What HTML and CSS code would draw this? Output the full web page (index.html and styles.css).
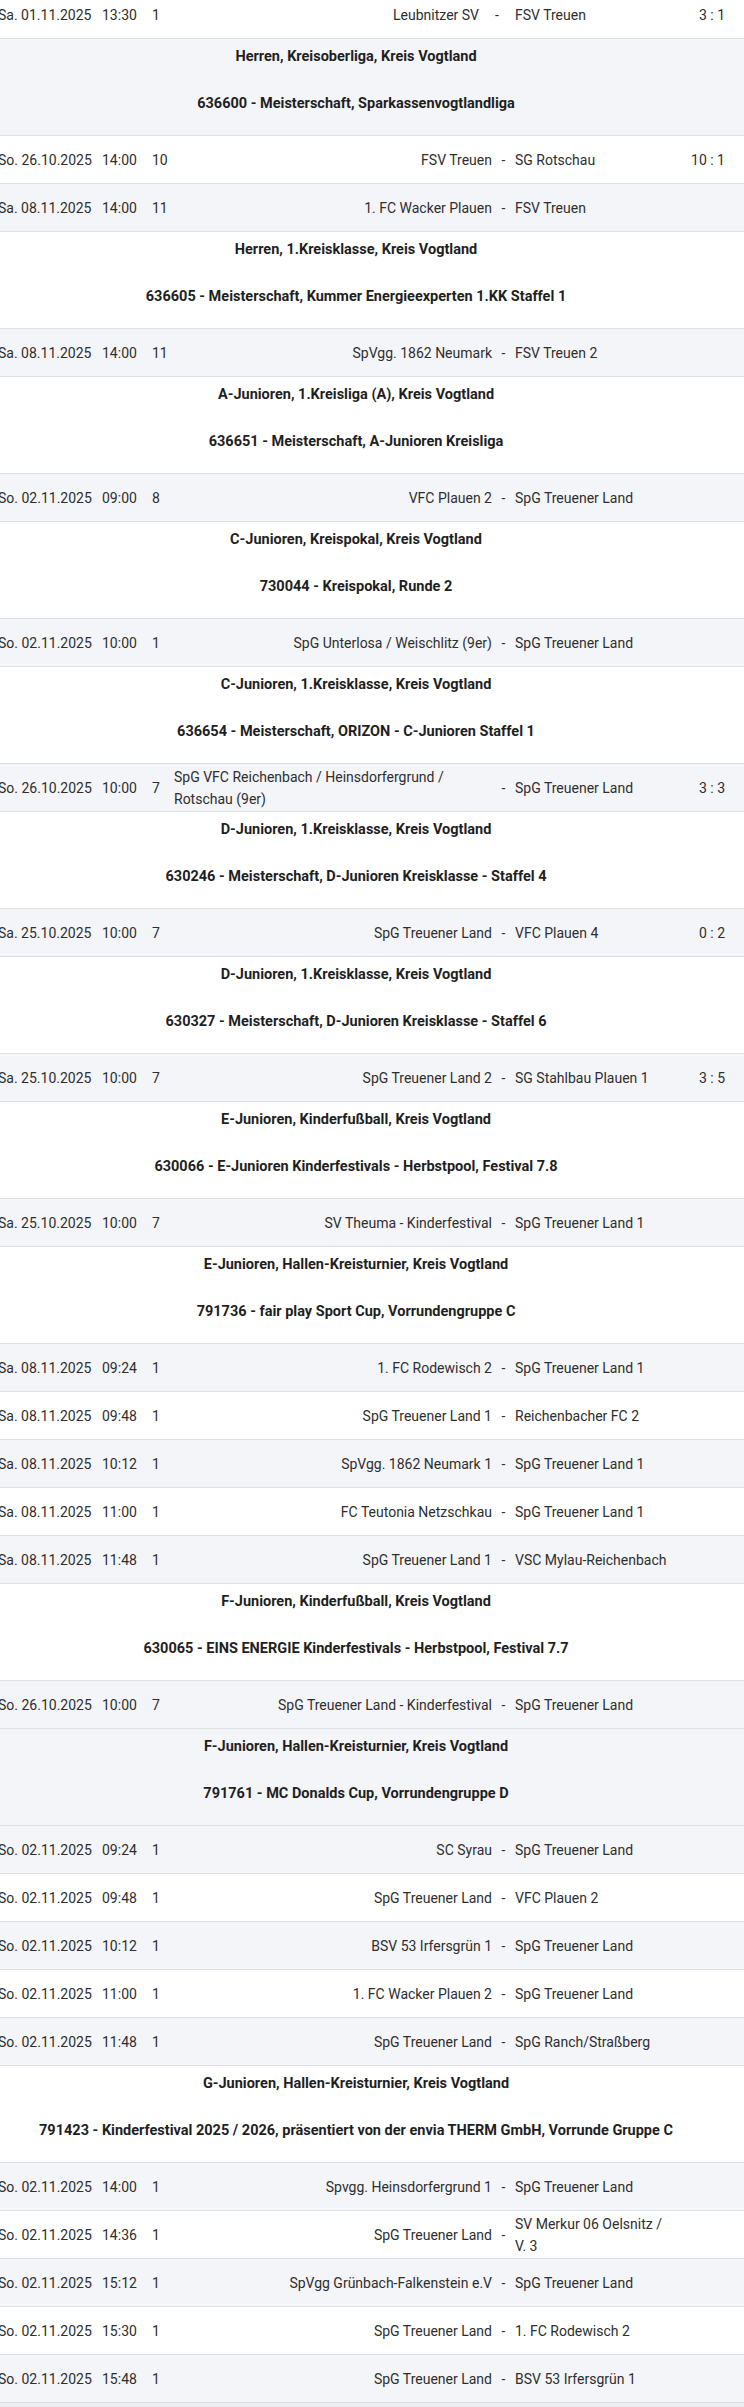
FILE: index.html
```html
<!DOCTYPE html>
<html lang="de">
<head>
<meta charset="utf-8">
<title>Spielplan</title>
<link rel="stylesheet" href="styles.css">
</head>
<body>
<div class="fixtures">
  <div class="match match--first">
    <span class="match__date">Sa. 01.11.2025</span><span class="match__time">13:30</span><span class="match__no">1</span>
    <span class="match__home"><span>Leubnitzer SV</span></span><span class="match__sep">-</span><span class="match__away">FSV Treuen</span><span class="match__score">3 : 1</span>
  </div>
  <div class="group group--alt">
    <div class="group__title">Herren, Kreisoberliga, Kreis Vogtland</div>
    <div class="group__comp">636600 - Meisterschaft, Sparkassenvogtlandliga</div>
  </div>
  <div class="match">
    <span class="match__date">So. 26.10.2025</span><span class="match__time">14:00</span><span class="match__no">10</span>
    <span class="match__home"><span>FSV Treuen</span></span><span class="match__sep">-</span><span class="match__away">SG Rotschau</span><span class="match__score">10 : 1</span>
  </div>
  <div class="match match--alt">
    <span class="match__date">Sa. 08.11.2025</span><span class="match__time">14:00</span><span class="match__no">11</span>
    <span class="match__home"><span>1. FC Wacker Plauen</span></span><span class="match__sep">-</span><span class="match__away">FSV Treuen</span><span class="match__score"></span>
  </div>
  <div class="group">
    <div class="group__title">Herren, 1.Kreisklasse, Kreis Vogtland</div>
    <div class="group__comp">636605 - Meisterschaft, Kummer Energieexperten 1.KK Staffel 1</div>
  </div>
  <div class="match match--alt">
    <span class="match__date">Sa. 08.11.2025</span><span class="match__time">14:00</span><span class="match__no">11</span>
    <span class="match__home"><span>SpVgg. 1862 Neumark</span></span><span class="match__sep">-</span><span class="match__away">FSV Treuen 2</span><span class="match__score"></span>
  </div>
  <div class="group">
    <div class="group__title">A-Junioren, 1.Kreisliga (A), Kreis Vogtland</div>
    <div class="group__comp">636651 - Meisterschaft, A-Junioren Kreisliga</div>
  </div>
  <div class="match match--alt">
    <span class="match__date">So. 02.11.2025</span><span class="match__time">09:00</span><span class="match__no">8</span>
    <span class="match__home"><span>VFC Plauen 2</span></span><span class="match__sep">-</span><span class="match__away">SpG Treuener Land</span><span class="match__score"></span>
  </div>
  <div class="group">
    <div class="group__title">C-Junioren, Kreispokal, Kreis Vogtland</div>
    <div class="group__comp">730044 - Kreispokal, Runde 2</div>
  </div>
  <div class="match match--alt">
    <span class="match__date">So. 02.11.2025</span><span class="match__time">10:00</span><span class="match__no">1</span>
    <span class="match__home"><span>SpG Unterlosa / Weischlitz (9er)</span></span><span class="match__sep">-</span><span class="match__away">SpG Treuener Land</span><span class="match__score"></span>
  </div>
  <div class="group">
    <div class="group__title">C-Junioren, 1.Kreisklasse, Kreis Vogtland</div>
    <div class="group__comp">636654 - Meisterschaft, ORIZON - C-Junioren Staffel 1</div>
  </div>
  <div class="match match--alt">
    <span class="match__date">So. 26.10.2025</span><span class="match__time">10:00</span><span class="match__no">7</span>
    <span class="match__home"><span>SpG VFC Reichenbach / Heinsdorfergrund / Rotschau (9er)</span></span><span class="match__sep">-</span><span class="match__away">SpG Treuener Land</span><span class="match__score">3 : 3</span>
  </div>
  <div class="group">
    <div class="group__title">D-Junioren, 1.Kreisklasse, Kreis Vogtland</div>
    <div class="group__comp">630246 - Meisterschaft, D-Junioren Kreisklasse - Staffel 4</div>
  </div>
  <div class="match match--alt">
    <span class="match__date">Sa. 25.10.2025</span><span class="match__time">10:00</span><span class="match__no">7</span>
    <span class="match__home"><span>SpG Treuener Land</span></span><span class="match__sep">-</span><span class="match__away">VFC Plauen 4</span><span class="match__score">0 : 2</span>
  </div>
  <div class="group">
    <div class="group__title">D-Junioren, 1.Kreisklasse, Kreis Vogtland</div>
    <div class="group__comp">630327 - Meisterschaft, D-Junioren Kreisklasse - Staffel 6</div>
  </div>
  <div class="match match--alt">
    <span class="match__date">Sa. 25.10.2025</span><span class="match__time">10:00</span><span class="match__no">7</span>
    <span class="match__home"><span>SpG Treuener Land 2</span></span><span class="match__sep">-</span><span class="match__away">SG Stahlbau Plauen 1</span><span class="match__score">3 : 5</span>
  </div>
  <div class="group">
    <div class="group__title">E-Junioren, Kinderfußball, Kreis Vogtland</div>
    <div class="group__comp">630066 - E-Junioren Kinderfestivals - Herbstpool, Festival 7.8</div>
  </div>
  <div class="match match--alt">
    <span class="match__date">Sa. 25.10.2025</span><span class="match__time">10:00</span><span class="match__no">7</span>
    <span class="match__home"><span>SV Theuma - Kinderfestival</span></span><span class="match__sep">-</span><span class="match__away">SpG Treuener Land 1</span><span class="match__score"></span>
  </div>
  <div class="group">
    <div class="group__title">E-Junioren, Hallen-Kreisturnier, Kreis Vogtland</div>
    <div class="group__comp">791736 - fair play Sport Cup, Vorrundengruppe C</div>
  </div>
  <div class="match match--alt">
    <span class="match__date">Sa. 08.11.2025</span><span class="match__time">09:24</span><span class="match__no">1</span>
    <span class="match__home"><span>1. FC Rodewisch 2</span></span><span class="match__sep">-</span><span class="match__away">SpG Treuener Land 1</span><span class="match__score"></span>
  </div>
  <div class="match">
    <span class="match__date">Sa. 08.11.2025</span><span class="match__time">09:48</span><span class="match__no">1</span>
    <span class="match__home"><span>SpG Treuener Land 1</span></span><span class="match__sep">-</span><span class="match__away">Reichenbacher FC 2</span><span class="match__score"></span>
  </div>
  <div class="match match--alt">
    <span class="match__date">Sa. 08.11.2025</span><span class="match__time">10:12</span><span class="match__no">1</span>
    <span class="match__home"><span>SpVgg. 1862 Neumark 1</span></span><span class="match__sep">-</span><span class="match__away">SpG Treuener Land 1</span><span class="match__score"></span>
  </div>
  <div class="match">
    <span class="match__date">Sa. 08.11.2025</span><span class="match__time">11:00</span><span class="match__no">1</span>
    <span class="match__home"><span>FC Teutonia Netzschkau</span></span><span class="match__sep">-</span><span class="match__away">SpG Treuener Land 1</span><span class="match__score"></span>
  </div>
  <div class="match match--alt">
    <span class="match__date">Sa. 08.11.2025</span><span class="match__time">11:48</span><span class="match__no">1</span>
    <span class="match__home"><span>SpG Treuener Land 1</span></span><span class="match__sep">-</span><span class="match__away">VSC Mylau-Reichenbach</span><span class="match__score"></span>
  </div>
  <div class="group">
    <div class="group__title">F-Junioren, Kinderfußball, Kreis Vogtland</div>
    <div class="group__comp">630065 - EINS ENERGIE Kinderfestivals - Herbstpool, Festival 7.7</div>
  </div>
  <div class="match match--alt">
    <span class="match__date">So. 26.10.2025</span><span class="match__time">10:00</span><span class="match__no">7</span>
    <span class="match__home"><span>SpG Treuener Land - Kinderfestival</span></span><span class="match__sep">-</span><span class="match__away">SpG Treuener Land</span><span class="match__score"></span>
  </div>
  <div class="group group--alt">
    <div class="group__title">F-Junioren, Hallen-Kreisturnier, Kreis Vogtland</div>
    <div class="group__comp">791761 - MC Donalds Cup, Vorrundengruppe D</div>
  </div>
  <div class="match match--alt">
    <span class="match__date">So. 02.11.2025</span><span class="match__time">09:24</span><span class="match__no">1</span>
    <span class="match__home"><span>SC Syrau</span></span><span class="match__sep">-</span><span class="match__away">SpG Treuener Land</span><span class="match__score"></span>
  </div>
  <div class="match">
    <span class="match__date">So. 02.11.2025</span><span class="match__time">09:48</span><span class="match__no">1</span>
    <span class="match__home"><span>SpG Treuener Land</span></span><span class="match__sep">-</span><span class="match__away">VFC Plauen 2</span><span class="match__score"></span>
  </div>
  <div class="match match--alt">
    <span class="match__date">So. 02.11.2025</span><span class="match__time">10:12</span><span class="match__no">1</span>
    <span class="match__home"><span>BSV 53 Irfersgrün 1</span></span><span class="match__sep">-</span><span class="match__away">SpG Treuener Land</span><span class="match__score"></span>
  </div>
  <div class="match">
    <span class="match__date">So. 02.11.2025</span><span class="match__time">11:00</span><span class="match__no">1</span>
    <span class="match__home"><span>1. FC Wacker Plauen 2</span></span><span class="match__sep">-</span><span class="match__away">SpG Treuener Land</span><span class="match__score"></span>
  </div>
  <div class="match match--alt">
    <span class="match__date">So. 02.11.2025</span><span class="match__time">11:48</span><span class="match__no">1</span>
    <span class="match__home"><span>SpG Treuener Land</span></span><span class="match__sep">-</span><span class="match__away">SpG Ranch/Straßberg</span><span class="match__score"></span>
  </div>
  <div class="group">
    <div class="group__title">G-Junioren, Hallen-Kreisturnier, Kreis Vogtland</div>
    <div class="group__comp">791423 - Kinderfestival 2025 / 2026, präsentiert von der envia THERM GmbH, Vorrunde Gruppe C</div>
  </div>
  <div class="match match--alt">
    <span class="match__date">So. 02.11.2025</span><span class="match__time">14:00</span><span class="match__no">1</span>
    <span class="match__home"><span>Spvgg. Heinsdorfergrund 1</span></span><span class="match__sep">-</span><span class="match__away">SpG Treuener Land</span><span class="match__score"></span>
  </div>
  <div class="match">
    <span class="match__date">So. 02.11.2025</span><span class="match__time">14:36</span><span class="match__no">1</span>
    <span class="match__home"><span>SpG Treuener Land</span></span><span class="match__sep">-</span><span class="match__away">SV Merkur 06 Oelsnitz / V. 3</span><span class="match__score"></span>
  </div>
  <div class="match match--alt">
    <span class="match__date">So. 02.11.2025</span><span class="match__time">15:12</span><span class="match__no">1</span>
    <span class="match__home"><span>SpVgg Grünbach-Falkenstein e.V</span></span><span class="match__sep">-</span><span class="match__away">SpG Treuener Land</span><span class="match__score"></span>
  </div>
  <div class="match">
    <span class="match__date">So. 02.11.2025</span><span class="match__time">15:30</span><span class="match__no">1</span>
    <span class="match__home"><span>SpG Treuener Land</span></span><span class="match__sep">-</span><span class="match__away">1. FC Rodewisch 2</span><span class="match__score"></span>
  </div>
  <div class="match match--alt">
    <span class="match__date">So. 02.11.2025</span><span class="match__time">15:48</span><span class="match__no">1</span>
    <span class="match__home"><span>SpG Treuener Land</span></span><span class="match__sep">-</span><span class="match__away">BSV 53 Irfersgrün 1</span><span class="match__score"></span>
  </div>
  <div class="fixtures__end"></div>
</div>
</body>
</html>
```

FILE: styles.css
```css
html, body {
  margin: 0;
  padding: 0;
  background: #ffffff;
}

body {
  font-family: Roboto, "Noto Sans", "Liberation Sans", sans-serif;
  color: #2e2e2e;
  overflow: hidden;
}

.fixtures {
  margin: -9px 0 0 -2px;
}

.match {
  display: grid;
  grid-template-columns: 104px 50px 22px 318px 23px 160px 50px;
  align-items: center;
  height: 47px;
  border-bottom: 1px solid #dcdfe5;
  font-size: 14px;
  line-height: 22px;
  background: #ffffff;
}

.match--alt {
  background: #f4f5f9;
}

.match--first {
  grid-template-columns: 104px 50px 22px 305px 36px 160px 50px;
}

.match__date,
.match__time,
.match__no {
  white-space: nowrap;
}

.match__home {
  display: flex;
  justify-content: flex-end;
}

.match__sep {
  text-align: center;
}

.match__score {
  text-align: right;
  white-space: nowrap;
}

.group {
  padding: 8px 30px 21px 0;
  border-bottom: 1px solid #dcdfe5;
  text-align: center;
  font-weight: 700;
  font-size: 14.5px;
  line-height: 20px;
  color: #1f1f1f;
  background: #ffffff;
}

.group--alt {
  background: #f4f5f9;
}

.group__title {
  margin-bottom: 27px;
}

.fixtures__end {
  height: 12px;
  background: #eceef2;
}
```
